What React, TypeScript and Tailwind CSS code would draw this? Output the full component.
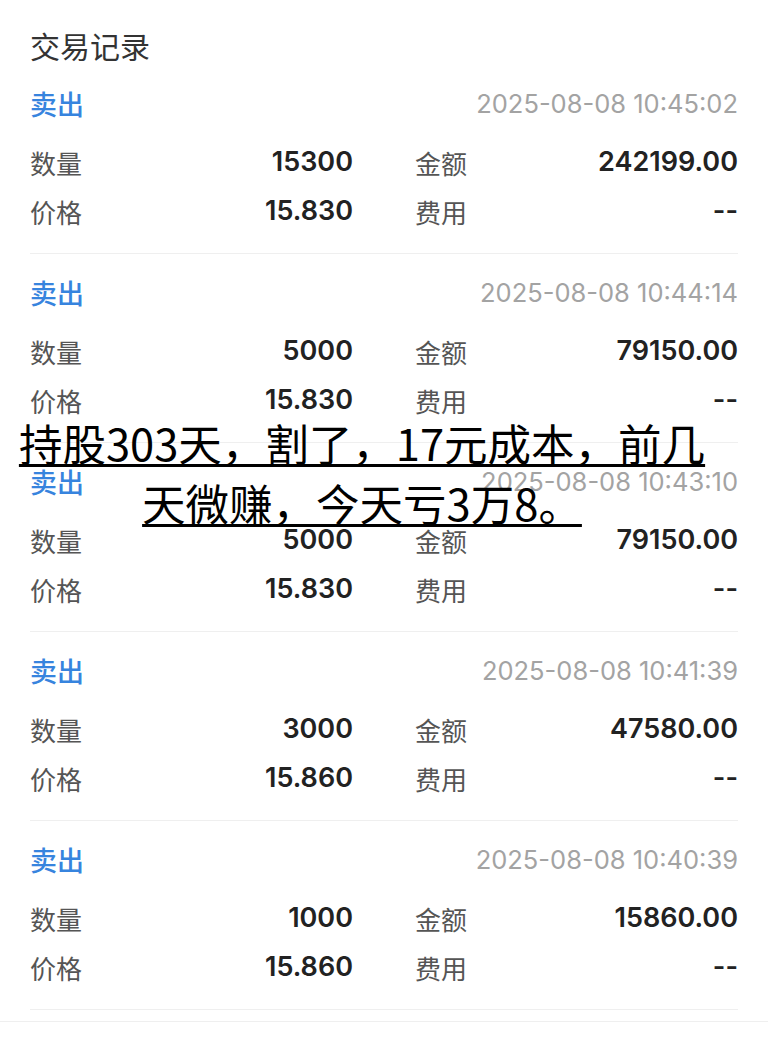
import React from "react";

interface Trade {
  time: string;
  qty: string;
  amount: string;
  price: string;
  fee: string;
}

const trades: Trade[] = [
  { time: "2025-08-08 10:45:02", qty: "15300", amount: "242199.00", price: "15.830", fee: "--" },
  { time: "2025-08-08 10:44:14", qty: "5000", amount: "79150.00", price: "15.830", fee: "--" },
  { time: "2025-08-08 10:43:10", qty: "5000", amount: "79150.00", price: "15.830", fee: "--" },
  { time: "2025-08-08 10:41:39", qty: "3000", amount: "47580.00", price: "15.860", fee: "--" },
  { time: "2025-08-08 10:40:39", qty: "1000", amount: "15860.00", price: "15.860", fee: "--" },
];

const Row: React.FC<{ l1: string; v1: string; l2: string; v2: string }> = ({ l1, v1, l2, v2 }) => (
  <div className="flex items-center h-[49px]">
    <div className="w-[323px] flex items-center justify-between">
      <span className="text-[26px] text-[#555] font-['Noto_Sans_CJK_SC',sans-serif]">{l1}</span>
      <span className="text-[27px] font-semibold text-[#222] font-[Inter,sans-serif]">{v1}</span>
    </div>
    <div className="flex-1 ml-[62px] flex items-center justify-between">
      <span className="text-[26px] text-[#555] font-['Noto_Sans_CJK_SC',sans-serif]">{l2}</span>
      <span className="text-[27px] font-semibold text-[#222] font-[Inter,sans-serif]">{v2}</span>
    </div>
  </div>
);

const TradeItem: React.FC<{ t: Trade }> = ({ t }) => (
  <div className="pt-[15px] pb-[17px] border-b border-[#efefef]">
    <div className="flex items-center justify-between h-[48px]">
      <span className="text-[27px] font-medium text-[#3784de] font-['Noto_Sans_CJK_SC',sans-serif]">卖出</span>
      <span className="text-[25.5px] text-[#a3a3a3] font-[Inter,sans-serif]">{t.time}</span>
    </div>
    <div className="mt-[10px]">
      <Row l1="数量" v1={t.qty} l2="金额" v2={t.amount} />
      <Row l1="价格" v1={t.price} l2="费用" v2={t.fee} />
    </div>
  </div>
);

export default function App() {
  return (
    <div className="relative w-[768px] h-[1039px] bg-white overflow-hidden">
      <div className="h-[65px] px-[30px] pt-[30px]">
        <span className="block text-[30px] text-[#333] font-['Noto_Sans_CJK_SC',sans-serif] leading-none">交易记录</span>
      </div>
      <div className="px-[30px]">
        {trades.map((t, i) => (
          <TradeItem key={i} t={t} />
        ))}
      </div>
      <div className="mt-[11px] border-t border-[#efefef]" />

      <div className="absolute left-0 top-[413px] w-[724px] text-center text-black text-[43.5px] leading-[60px] font-['Noto_Sans_CJK_SC',sans-serif]">
        <div>
          <span className="underline decoration-[2.5px] underline-offset-[3px]">持股303天，割了，17元成本，前几</span>
        </div>
        <div>
          <span className="underline decoration-[2.5px] underline-offset-[3px]">天微赚，今天亏3万8。</span>
        </div>
      </div>
    </div>
  );
}
